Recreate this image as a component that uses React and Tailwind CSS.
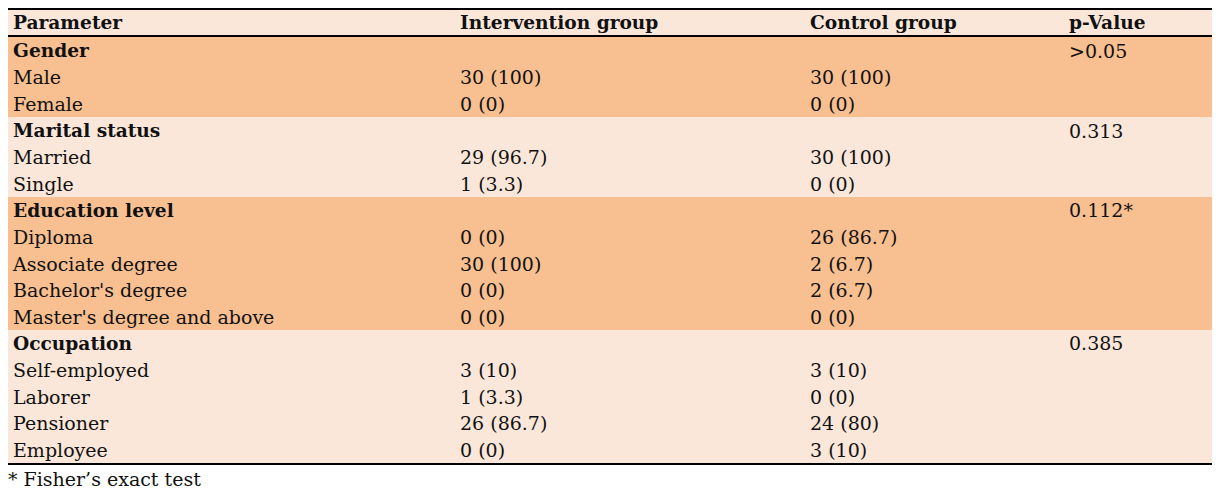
const sections = [
  {
    title: 'Gender',
    p: '>0.05',
    dark: true,
    rows: [
      ['Male', '30 (100)', '30 (100)'],
      ['Female', '0 (0)', '0 (0)'],
    ],
  },
  {
    title: 'Marital status',
    p: '0.313',
    dark: false,
    rows: [
      ['Married', '29 (96.7)', '30 (100)'],
      ['Single', '1 (3.3)', '0 (0)'],
    ],
  },
  {
    title: 'Education level',
    p: '0.112*',
    dark: true,
    rows: [
      ['Diploma', '0 (0)', '26 (86.7)'],
      ['Associate degree', '30 (100)', '2 (6.7)'],
      ["Bachelor's degree", '0 (0)', '2 (6.7)'],
      ["Master's degree and above", '0 (0)', '0 (0)'],
    ],
  },
  {
    title: 'Occupation',
    p: '0.385',
    dark: false,
    rows: [
      ['Self-employed', '3 (10)', '3 (10)'],
      ['Laborer', '1 (3.3)', '0 (0)'],
      ['Pensioner', '26 (86.7)', '24 (80)'],
      ['Employee', '0 (0)', '3 (10)'],
    ],
  },
];

const cols = 'grid grid-cols-[447px_350px_259px_148px]';

function Row({ cells, bold }) {
  return (
    <div className={`${cols} h-[26.6px] items-center leading-none pt-[2px]`}>
      {cells.map((c, i) => (
        <div key={i} className={`pl-[5px] whitespace-nowrap ${bold && i === 0 ? 'font-bold text-[18.6px]' : ''}`}>
          {c}
        </div>
      ))}
    </div>
  );
}

export default function App() {
  return (
    <div className="w-[1220px] h-[490px] bg-white pt-[8px] px-[8px] text-[#111] text-[19px] font-['DejaVu_Serif',serif]">
      <div className="w-[1204px] border-t-2 border-black">
        <div className={`${cols} h-[27px] items-center bg-[#fbe7da] border-b-2 border-black font-bold text-[18.6px] leading-none pt-[2px]`}>
          <div className="pl-[5px]">Parameter</div>
          <div className="pl-[5px]">Intervention group</div>
          <div className="pl-[5px]">Control group</div>
          <div className="pl-[5px]">p-Value</div>
        </div>
        {sections.map((s) => (
          <div key={s.title} className={s.dark ? 'bg-[#f8bf90]' : 'bg-[#fbe7da]'}>
            <Row cells={[s.title, '', '', s.p]} bold />
            {s.rows.map((r) => (
              <Row key={r[0]} cells={[...r, '']} />
            ))}
          </div>
        ))}
        <div className="border-t-2 border-black" />
      </div>
      <div className="pt-[5px] leading-none">* Fisher’s exact test</div>
    </div>
  );
}
